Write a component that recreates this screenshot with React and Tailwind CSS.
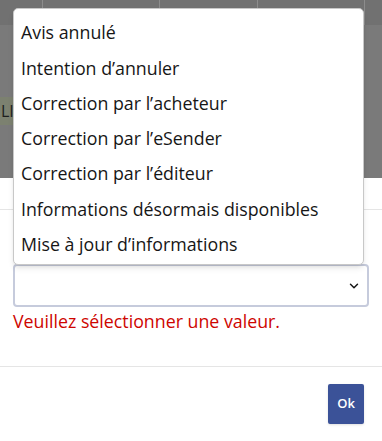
import { ChevronDown } from "lucide-react";

const options = [
  "Avis annulé",
  "Intention d’annuler",
  "Correction par l’acheteur",
  "Correction par l’eSender",
  "Correction par l’éditeur",
  "Informations désormais disponibles",
  "Mise à jour d’informations",
];

const App = () => {
  return (
    <div className="relative w-[382px] h-[441px] overflow-hidden bg-white font-['Open_Sans','Liberation_Sans',sans-serif] text-[#161616]">
      {/* page behind the overlay */}
      <div className="h-[178px] bg-[#7a7a7a] flex flex-col">
        <div className="h-[25px] bg-[#717171] flex">
          <div className="w-[43px] border-r border-[#8c8c8c]" />
          <div className="w-[117px] border-r border-[#8c8c8c]" />
          <div className="w-[98px] border-r border-[#8c8c8c]" />
          <div className="w-[107px] border-r border-[#8c8c8c]" />
        </div>
        <div className="mt-[72px] h-[28px] w-[40px] bg-[#7c8170] flex items-center pl-[1px] text-[16px] text-[#1e1e1e]">LI</div>
      </div>

      {/* modal */}
      <div className="h-[32px] border-b border-[#e5e5e5]" />
      <div className="px-[13px] pt-[54px] h-[157px] border-b border-[#e5e5e5]">
        <div className="h-[43px] rounded-[4px] border-2 border-[#c6cbdc] bg-white flex items-center justify-end pr-[6px]">
          <ChevronDown size={14} strokeWidth={2.5} className="text-[#161616]" />
        </div>
        <p className="mt-[1px] text-[17.8px] leading-[26px] text-[#ce0500]">Veuillez sélectionner une valeur.</p>
      </div>
      <div className="flex justify-end px-[18px] pt-[17px]">
        <button className="w-[36px] h-[40px] rounded-[2px] bg-[#3b5298] text-white text-[13px] font-semibold shadow-sm">Ok</button>
      </div>

      {/* open select list */}
      <ul className="absolute left-[13px] top-[8px] w-[351px] h-[257px] bg-white rounded-[5px] border border-[#c8c8c8] shadow-md pt-[6px]">
        {options.map((o) => (
          <li key={o} className="h-[35.3px] flex items-center pl-[7px] text-[17.8px]">
            {o}
          </li>
        ))}
      </ul>
    </div>
  );
};

export default App;
